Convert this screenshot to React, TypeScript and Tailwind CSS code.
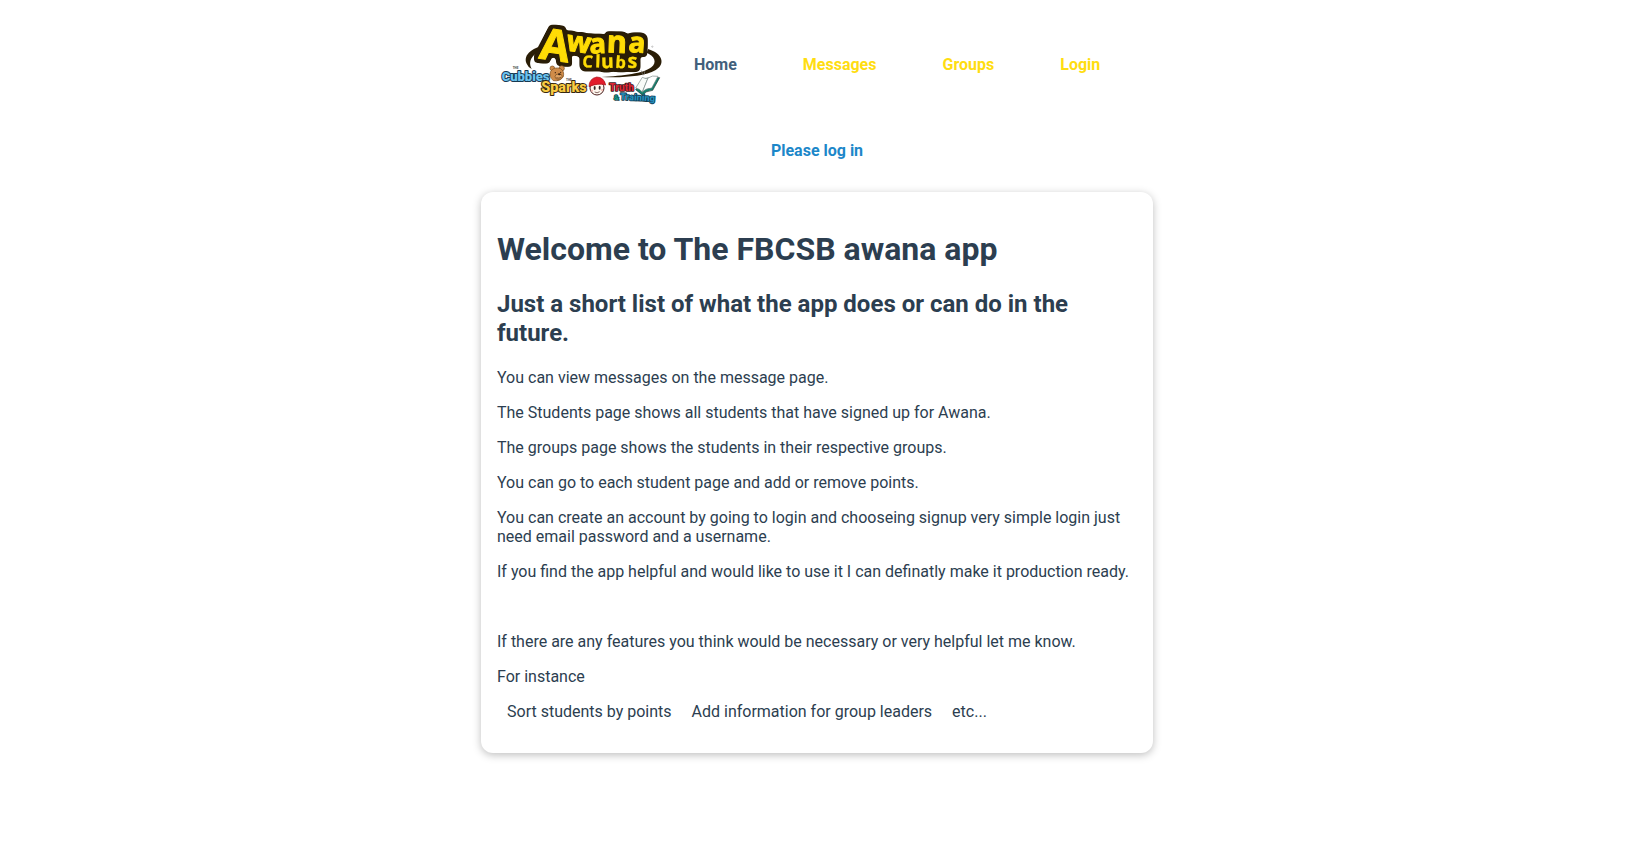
import React from "react";

const navItems = [
  { label: "Home", href: "#home", active: true },
  { label: "Messages", href: "#messages", active: false },
  { label: "Groups", href: "#groups", active: false },
  { label: "Login", href: "#login", active: false },
];

const introLines = [
  "You can view messages on the message page.",
  "The Students page shows all students that have signed up for Awana.",
  "The groups page shows the students in their respective groups.",
  "You can go to each student page and add or remove points.",
  "You can create an account by going to login and chooseing signup very simple login just need email password and a username.",
  "If you find the app helpful and would like to use it I can definatly make it production ready.",
];

const ideas = ["Sort students by points", "Add information for group leaders", "etc..."];

type Glyph = { char: string; x: number; y: number; size: number; turn: number };

const awana: Glyph[] = [
  { char: "A", x: 189, y: 133, size: 130, turn: 8 },
  { char: "w", x: 263, y: 108, size: 86, turn: 8 },
  { char: "a", x: 324, y: 112, size: 82, turn: -2 },
  { char: "n", x: 380, y: 110, size: 92, turn: 2 },
  { char: "a", x: 439, y: 109, size: 84, turn: 4 },
];

const clubs: Glyph[] = [
  { char: "C", x: 292, y: 154, size: 50, turn: 4 },
  { char: "l", x: 323, y: 154, size: 52, turn: 2 },
  { char: "u", x: 353, y: 156, size: 58, turn: -2 },
  { char: "b", x: 391, y: 156, size: 50, turn: 4 },
  { char: "s", x: 427, y: 156, size: 60, turn: 2 },
];

function Letters({ glyphs, width }: { glyphs: Glyph[]; width: number }) {
  return (
    <g strokeWidth={width} strokeLinejoin="round" textAnchor="middle" fontWeight="700">
      {glyphs.map((g, i) => (
        <text key={i} x={g.x} y={g.y} fontSize={g.size} transform={`rotate(${g.turn} ${g.x} ${g.y})`}>
          {g.char}
        </text>
      ))}
    </g>
  );
}

function Logo() {
  const ink = "#2a1d06";
  const yellow = "#ffdc05";
  return (
    <svg
      viewBox="30 15 486 258"
      className="block h-[86px] w-[162px] shrink-0 overflow-visible font-['Open_Sans',sans-serif]"
      role="img"
      aria-label="Awana Clubs"
    >
      <defs>
        <filter id="halo" filterUnits="userSpaceOnUse" x="30" y="5" width="486" height="268" colorInterpolationFilters="sRGB">
          <feMorphology in="SourceAlpha" operator="dilate" radius="9" result="wide" />
          <feGaussianBlur in="wide" stdDeviation="4" result="soft" />
          <feComponentTransfer in="soft" result="shape">
            <feFuncA type="linear" slope="5" intercept="-1" />
          </feComponentTransfer>
          <feFlood floodColor={ink} />
          <feComposite in2="shape" operator="in" result="outline" />
          <feMerge>
            <feMergeNode in="outline" />
            <feMergeNode in="SourceGraphic" />
          </feMerge>
        </filter>
      </defs>
      <path d="M180 86 C128 90 98 116 110 143 Q114 153 125 159 C110 129 136 106 174 100Z" fill={ink} />
      <path d="M474 99 C518 112 528 144 496 163 C464 182 394 186 334 183 C400 180 462 172 484 154 C502 139 494 120 470 110Z" fill={ink} />
      <g fill={yellow} stroke={yellow} filter="url(#halo)">
        <Letters glyphs={awana} width={3} />
        <Letters glyphs={clubs} width={1} />
      </g>
      <circle cx="487" cy="92" r="2" fill="none" stroke="#666" />

      <g fontWeight="900" strokeLinejoin="round" className="font-[Roboto,sans-serif]" style={{ paintOrder: "stroke" }}>
        <text x="68" y="160" fontSize="9" fill="#555">THE</text>
        <text x="35" y="196" fontSize="39" fill="#6cc3ee" stroke="#173851" strokeWidth="6">Cubbies</text>
        <text x="228" y="196" fontSize="9" fill="#555">THE</text>
        <text x="154" y="229" fontSize="43" fill="#f9cc43" stroke="#35270f" strokeWidth="6">Sparks</text>
        <text x="358" y="225" fontSize="30" fill="#dc2733" stroke="#38171b" strokeWidth="5">Truth</text>
        <text x="371" y="251" fontSize="24" fill="#189580" stroke="#153b48" strokeWidth="4">&amp;</text>
        <text x="390" y="251" fontSize="28" fill="#248fbd" stroke="#133b50" strokeWidth="5" transform="rotate(3 390 251)">Training</text>
      </g>

      <g transform="translate(0 -3)">
        <g fill="#d08c49" stroke="#754819" strokeWidth="2">
          <circle cx="187" cy="160" r="7" />
          <circle cx="215" cy="160" r="8" />
          <path d="M182 169 Q192 154 212 161 Q224 169 220 185 Q210 200 190 197 Q175 185 182 169Z" />
          <ellipse cx="206" cy="185" rx="11" ry="8" fill="#dfa363" />
        </g>
        <g fill="#3b2412">
          <ellipse cx="208" cy="178" rx="4" ry="3" />
          <circle cx="196" cy="173" r="2" />
          <circle cx="212" cy="172" r="2" />
        </g>
        <path d="M199 188 Q207 192 214 186" fill="none" stroke="#593315" strokeWidth="2" />

        <circle cx="321" cy="219" r="21" fill="#fff8ef" stroke="#4b2020" strokeWidth="3" />
        <path d="M297 215 Q297 191 320 186 Q342 186 347 210 Q323 203 297 215Z" fill="#e21d2c" stroke="#a1131a" strokeWidth="2" />
        <ellipse cx="314" cy="219" rx="3" ry="6" fill="#352a2a" />
        <ellipse cx="329" cy="218" rx="3" ry="6" fill="#352a2a" />
        <circle cx="306" cy="227" r="3" fill="#efb0aa" />
        <circle cx="336" cy="225" r="3" fill="#efb0aa" />
        <path d="M314 231 Q321 236 329 230" fill="none" stroke="#4b2020" strokeWidth="2" />

        <g strokeLinejoin="round" strokeWidth="2">
          <path d="M437 224 L458 193 Q480 185 509 188 L488 226 Q467 228 457 240Z" fill="#16816f" stroke="#1b3430" />
          <path d="M437 219 L457 187 Q465 192 474 189 L457 231 Q449 221 437 219Z" fill="#f8fbf8" stroke="#7b8a86" />
          <path d="M474 189 Q486 180 504 184 L485 219 Q466 220 457 231Z" fill="#fff" stroke="#7b8a86" />
          <path d="M453 166 L459 181 M464 169 L463 178" stroke="#777" />
        </g>
      </g>
    </svg>
  );
}

export default function App() {
  return (
    <div className="min-h-screen bg-white font-[Roboto,sans-serif] text-base leading-[19px] text-[#2c3e50]">
      <div className="mx-auto max-w-2xl pt-[21px]">
        <header className="flex items-center pl-[19px]">
          <Logo />
          <nav aria-label="Main" className="flex gap-[66px] pl-8 font-bold">
            {navItems.map((item) => (
              <a
                key={item.label}
                href={item.href}
                aria-current={item.active ? "page" : undefined}
                className={item.active ? "text-[#42607c]" : "text-[#ffdd11]"}
              >
                {item.label}
              </a>
            ))}
          </nav>
        </header>

        <p className="mt-[34px] text-center font-bold text-[#1c87c9]">Please log in</p>

        <main className="mt-8 flex flex-col gap-4 rounded-xl px-4 pt-[38px] pb-8 shadow-[0_2px_8px_rgba(0,0,0,0.26)]">
          <h1 className="mb-[6px] text-[32px] leading-[38px] font-bold">Welcome to The FBCSB awana app</h1>
          <h2 className="mb-1 text-2xl leading-[29px] font-bold">
            Just a short list of what the app does or can do in the future.
          </h2>
          {introLines.map((line) => (
            <p key={line}>{line}</p>
          ))}
          <p className="mt-[35px]">If there are any features you think would be necessary or very helpful let me know.</p>
          <p>For instance</p>
          <ul className="flex flex-wrap gap-5 px-[10px]">
            {ideas.map((idea) => (
              <li key={idea}>{idea}</li>
            ))}
          </ul>
        </main>
      </div>
    </div>
  );
}
